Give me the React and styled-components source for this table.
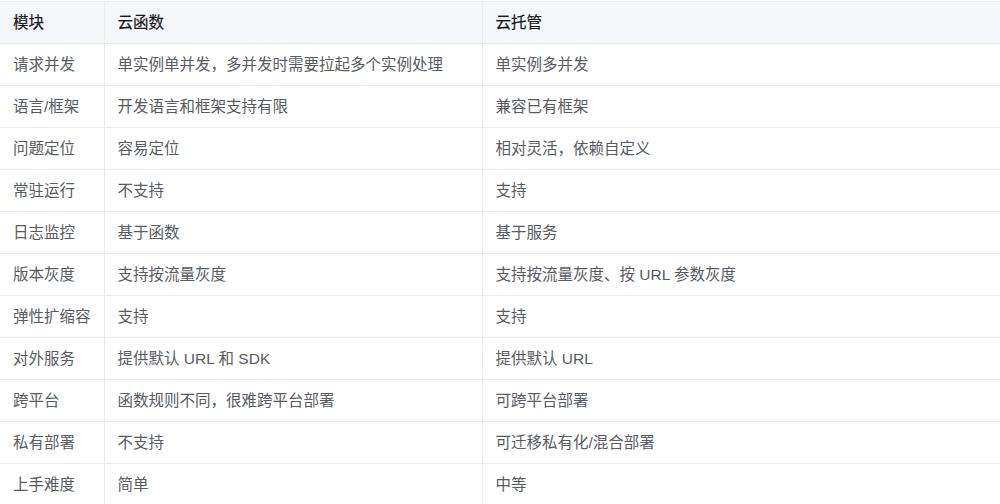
import React from 'react';
import styled, { createGlobalStyle } from 'styled-components';

const GlobalStyle = createGlobalStyle`
  html, body {
    margin: 0;
    padding: 0;
    background: #ffffff;
  }
  body {
    font-family: "Liberation Sans", "Noto Sans CJK SC", sans-serif;
  }
`;

const Wrapper = styled.div`
  width: 1000px;
  height: 504px;
  overflow: hidden;
  padding-top: 1px;
  box-sizing: border-box;
`;

const Table = styled.table`
  width: 1000px;
  border-collapse: collapse;
  table-layout: fixed;
  font-size: 15.5px;
`;

const HeadCell = styled.th`
  height: 42px;
  padding: 0 0 3px 13px;
  text-align: left;
  font-weight: 400;
  color: #16181c;
  background: #f5f6fa;
  border-top: 1px solid #e9ebf0;
  border-bottom: 1px solid #e9ebf0;
  border-left: ${({ $first }) => ($first ? 'none' : '1px solid #e9ebf0')};
  box-sizing: border-box;
  -webkit-text-stroke: 0.2px #16181c;
`;

const Cell = styled.td`
  height: 42px;
  padding: 0 0 3px 13px;
  color: #575b62;
  border-bottom: 1px solid #e9ebf0;
  border-left: ${({ $first }) => ($first ? 'none' : '1px solid #e9ebf0')};
  box-sizing: border-box;
  white-space: nowrap;
`;

const rows = [
  ['请求并发', '单实例单并发，多并发时需要拉起多个实例处理', '单实例多并发'],
  ['语言/框架', '开发语言和框架支持有限', '兼容已有框架'],
  ['问题定位', '容易定位', '相对灵活，依赖自定义'],
  ['常驻运行', '不支持', '支持'],
  ['日志监控', '基于函数', '基于服务'],
  ['版本灰度', '支持按流量灰度', '支持按流量灰度、按 URL 参数灰度'],
  ['弹性扩缩容', '支持', '支持'],
  ['对外服务', '提供默认 URL 和 SDK', '提供默认 URL'],
  ['跨平台', '函数规则不同，很难跨平台部署', '可跨平台部署'],
  ['私有部署', '不支持', '可迁移私有化/混合部署'],
  ['上手难度', '简单', '中等'],
];

export default function App() {
  return (
    <Wrapper>
      <GlobalStyle />
      <Table>
        <colgroup>
          <col style={{ width: 104 }} />
          <col style={{ width: 378 }} />
          <col style={{ width: 518 }} />
        </colgroup>
        <thead>
          <tr>
            <HeadCell $first>模块</HeadCell>
            <HeadCell>云函数</HeadCell>
            <HeadCell>云托管</HeadCell>
          </tr>
        </thead>
        <tbody>
          {rows.map((r) => (
            <tr key={r[0]}>
              <Cell $first>{r[0]}</Cell>
              <Cell>{r[1]}</Cell>
              <Cell>{r[2]}</Cell>
            </tr>
          ))}
        </tbody>
      </Table>
    </Wrapper>
  );
}
